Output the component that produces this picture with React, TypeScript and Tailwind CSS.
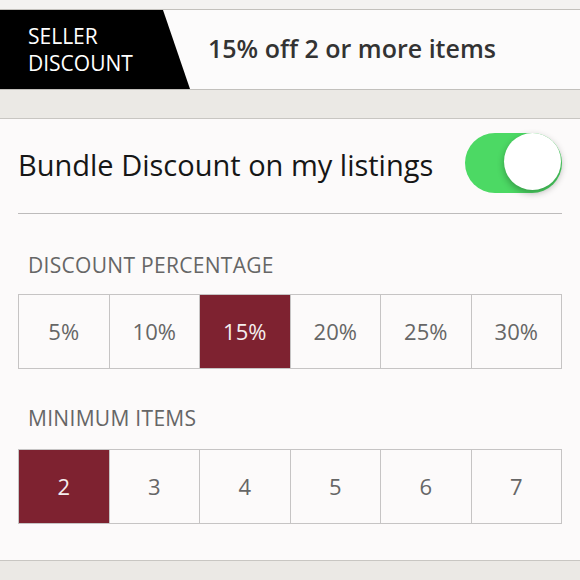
import React from "react";

const percents = ["5%", "10%", "15%", "20%", "25%", "30%"];
const minimums = ["2", "3", "4", "5", "6", "7"];

function Options({ items, selected }: { items: string[]; selected: string }) {
  return (
    <div className="mx-[18px] grid grid-cols-6 border-l border-t border-[#c6c4c4]">
      {items.map((v) => (
        <div
          key={v}
          className={
            v === selected
              ? "h-[74px] flex items-center justify-center border-r border-b border-[#c6c4c4] bg-[#7e2230] text-[22px] text-[#f4eeee]"
              : "h-[74px] flex items-center justify-center border-r border-b border-[#c6c4c4] text-[22px] text-[#666666]"
          }
        >
          {v}
        </div>
      ))}
    </div>
  );
}

export default function App() {
  return (
    <div
      className="w-[580px] h-[580px] overflow-hidden bg-[#ebe9e5]"
      style={{ fontFamily: "'Open Sans', sans-serif" }}
    >
      <div className="h-[9px] bg-[#f3f2f1]" />
      <div className="relative h-[81px] flex items-center border-y border-[#c2c0bc] bg-[#fcfbfb]">
        <div className="absolute left-0 top-0 bottom-0 w-[190px] bg-black [clip-path:polygon(0_0,163px_0,190px_100%,0_100%)]" />
        <div className="relative pl-[28px] w-[208px] text-[21px] leading-[27px] text-white">
          SELLER
          <br />
          DISCOUNT
        </div>
        <div className="relative text-[25px] font-semibold text-[#333333] mb-[2px]">
          15% off 2 or more items
        </div>
      </div>
      <div className="h-[28px]" />
      <div className="h-[443px] border-y border-[#c8c6c2] bg-[#fcfafa]">
        <div className="flex items-center justify-between px-[18px] pt-[14px] pb-[20px]">
          <span className="text-[29px] leading-[36px] text-[#161616] mt-[4px]">
            Bundle Discount on my listings
          </span>
          <div className="relative w-[97px] h-[60px] rounded-full bg-[#4cd964]">
            <div className="absolute right-[1px] top-0 w-[57px] h-[57px] rounded-full bg-white shadow-[0_3px_7px_rgba(0,0,0,0.3)]" />
          </div>
        </div>
        <div className="mx-[18px] h-px bg-[#bdbbbb]" />
        <div className="pl-[28px] pt-[40px] pb-[18px] text-[21px] leading-[22px] tracking-[0.3px] text-[#666666]">
          DISCOUNT PERCENTAGE
        </div>
        <Options items={percents} selected="15%" />
        <div className="pl-[28px] pt-[38px] pb-[20px] text-[21px] leading-[22px] tracking-[0.3px] text-[#666666]">
          MINIMUM ITEMS
        </div>
        <Options items={minimums} selected="2" />
      </div>
    </div>
  );
}
